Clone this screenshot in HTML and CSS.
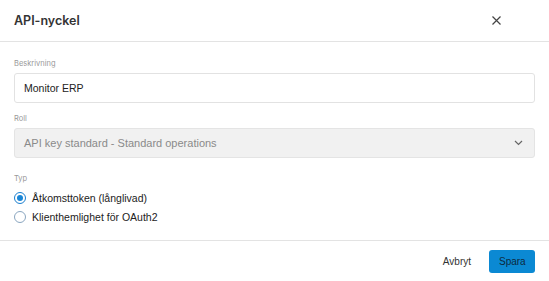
FILE: index.html
```html
<!DOCTYPE html>
<html lang="sv">
<head>
    <meta charset="UTF-8">
    <meta name="viewport" content="width=device-width, initial-scale=1.0">
    <title>API-nyckel</title>
    <link rel="stylesheet" href="styles.css">
</head>
<body>
    <div class="dialog">
        <div class="dialog-header">
            <h1 class="dialog-title">API-nyckel</h1>
            <button class="close-btn" aria-label="Stäng">
                <svg width="11" height="11" viewBox="0 0 11 11">
                    <path d="M1.5 1.5 L9.5 9.5 M9.5 1.5 L1.5 9.5" stroke="#444" stroke-width="1.2" fill="none"/>
                </svg>
            </button>
        </div>

        <div class="dialog-body">
            <div class="field">
                <label class="field-label" for="desc">Beskrivning</label>
                <input class="text-input" type="text" id="desc" value="Monitor ERP">
            </div>

            <div class="field">
                <span class="field-label">Roll</span>
                <div class="select disabled">
                    <span>API key standard - Standard operations</span>
                    <svg width="9" height="6" viewBox="0 0 9 6">
                        <path d="M1 1 L4.5 4.5 L8 1" stroke="#666" stroke-width="1.2" fill="none"/>
                    </svg>
                </div>
            </div>

            <div class="field field-type">
                <span class="field-label">Typ</span>
                <label class="radio">
                    <span class="radio-dot checked"></span>
                    Åtkomsttoken (långlivad)
                </label>
                <label class="radio">
                    <span class="radio-dot"></span>
                    Klienthemlighet för OAuth2
                </label>
            </div>
        </div>

        <div class="dialog-footer">
            <button class="btn btn-link">Avbryt</button>
            <button class="btn btn-primary">Spara</button>
        </div>
    </div>
</body>
</html>
```

FILE: styles.css
```css
body {
    margin: 0;
    font-family: "Liberation Sans", Arial, sans-serif;
    color: #222;
    background: #fff;
}
.dialog {
    width: 549px;
    height: 281px;
    display: flex;
    flex-direction: column;
}
.dialog-header {
    height: 41px;
    display: flex;
    align-items: center;
    justify-content: space-between;
    padding: 0 14px;
    border-bottom: 1px solid #e3e3e3;
}
.dialog-title {
    margin: 0;
    font-family: Inter, sans-serif;
    font-size: 12.5px;
    font-weight: 600;
    color: #333;
}
.close-btn {
    border: none;
    background: none;
    padding: 0;
    margin-right: 33px;
    display: flex;
}
.dialog-body {
    flex: 1;
    padding: 16px 14px 0;
    display: flex;
    flex-direction: column;
    gap: 10px;
}
.field {
    display: flex;
    flex-direction: column;
}
.field-type {
    margin-top: 5px;
}
.field-label {
    font-family: Inter, sans-serif;
    font-size: 7.5px;
    line-height: 11px;
    color: #999;
    margin-bottom: 4px;
}
.text-input {
    height: 30px;
    box-sizing: border-box;
    border: 1px solid #e2e2e2;
    border-radius: 3px;
    padding: 0 9px;
    font-family: "Liberation Sans", Arial, sans-serif;
    font-size: 10.5px;
    color: #222;
    outline: none;
}
.select {
    height: 30px;
    box-sizing: border-box;
    border: 1px solid #e4e4e4;
    border-radius: 3px;
    padding: 0 11px 0 9px;
    display: flex;
    align-items: center;
    justify-content: space-between;
    font-size: 11px;
}
.select.disabled {
    background: #f1f1f1;
    color: #8a8a8a;
}
.radio {
    display: flex;
    align-items: center;
    gap: 6px;
    font-size: 10.5px;
    color: #222;
    height: 19px;
}
.radio-dot {
    width: 10px;
    height: 10px;
    border: 1px solid #8aa6c0;
    border-radius: 50%;
    box-sizing: content-box;
    display: flex;
    align-items: center;
    justify-content: center;
}
.radio-dot.checked {
    border-color: #1a7fd0;
}
.radio-dot.checked::after {
    content: "";
    width: 6px;
    height: 6px;
    border-radius: 50%;
    background: #1a86d6;
}
.dialog-footer {
    height: 40px;
    border-top: 1px solid #e3e3e3;
    display: flex;
    align-items: center;
    justify-content: flex-end;
    gap: 8px;
    padding: 0 14px;
}
.btn {
    font-family: "Liberation Sans", Arial, sans-serif;
    font-size: 10px;
    border: none;
    border-radius: 3px;
    height: 23px;
    padding: 0 10px;
}
.btn-link {
    background: none;
    color: #333;
}
.btn-primary {
    background: #0b89d3;
    color: #0d2a40;
    width: 46px;
}
```
